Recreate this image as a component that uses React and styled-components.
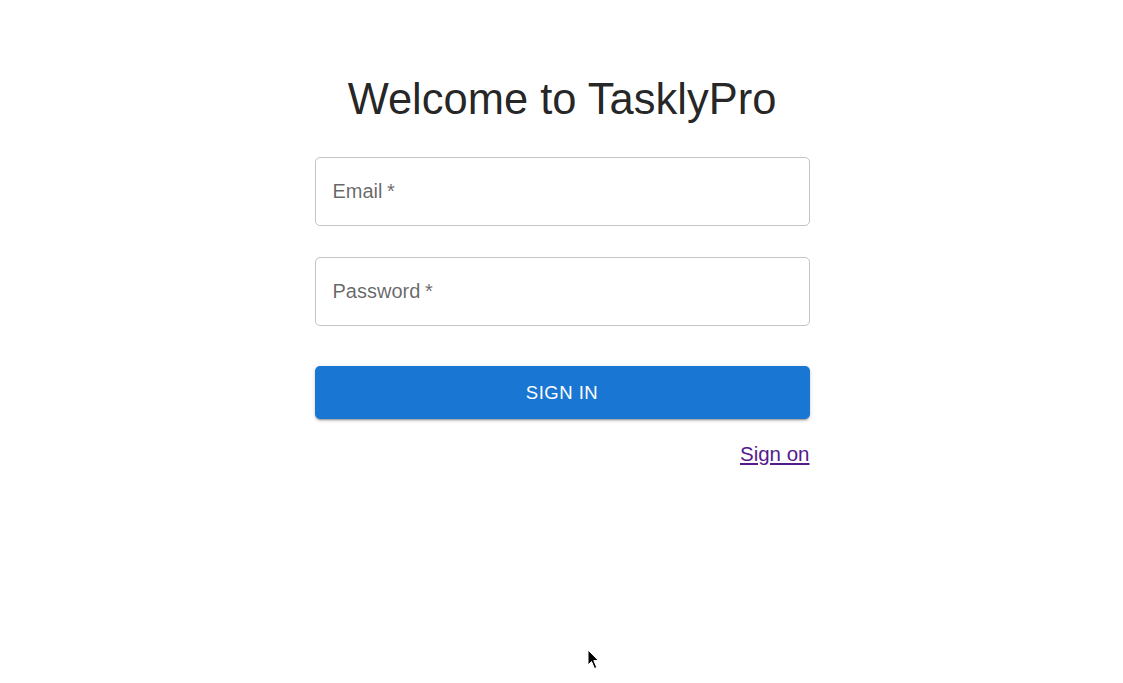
import styled, { createGlobalStyle } from 'styled-components';

const GlobalStyle = createGlobalStyle`
  html, body {
    margin: 0;
    padding: 0;
    background: #ffffff;
    font-family: "Liberation Sans", Arial, sans-serif;
  }
`;

const App = () => {
  return (
    <>
      <GlobalStyle />
      <Page>
        <Form>
          <Title>Welcome to TasklyPro</Title>
          <Field label="Email" />
          <Field label="Password" />
          <SubmitButton type="button">Sign in</SubmitButton>
          <LinkRow>
            <SignOnLink href="#">Sign on</SignOnLink>
          </LinkRow>
        </Form>
        <Cursor />
      </Page>
    </>
  );
};

const Field = ({ label }) => {
  return (
    <FieldBox>
      <FieldLabel>
        {label} <Asterisk>*</Asterisk>
      </FieldLabel>
    </FieldBox>
  );
};

const Cursor = () => (
  <CursorWrap>
    <svg width="14" height="22" viewBox="0 0 14 22">
      <path
        d="M1 1 L1 16 L4.5 12.5 L7.5 19.5 L9.8 18.5 L6.8 11.6 L11.5 11.6 Z"
        fill="#000"
        stroke="#fff"
        strokeWidth="1"
      />
    </svg>
  </CursorWrap>
);

const Page = styled.div`
  position: relative;
  width: 100%;
  height: 683px;
  display: flex;
  justify-content: center;
  padding-left: 1px;
  box-sizing: border-box;
`;

const Form = styled.div`
  width: 495px;
  margin-top: 73px;
  display: flex;
  flex-direction: column;
`;

const Title = styled.h1`
  margin: 0 0 32px;
  font-size: 43.5px;
  font-weight: 400;
  line-height: 52px;
  text-align: center;
  color: rgba(0, 0, 0, 0.87);
`;

const FieldBox = styled.div`
  height: 69px;
  border: 1px solid rgba(0, 0, 0, 0.23);
  border-radius: 5px;
  box-sizing: border-box;
  display: flex;
  align-items: center;
  padding-left: 17px;
  margin-bottom: 31px;

  &:nth-of-type(2) {
    margin-bottom: 40px;
  }
`;

const FieldLabel = styled.span`
  font-size: 20px;
  color: rgba(0, 0, 0, 0.6);
  line-height: 1;
  margin-top: -2px;
`;

const Asterisk = styled.span`
  margin-left: -1px;
`;

const SubmitButton = styled.button`
  height: 53px;
  border: none;
  border-radius: 5px;
  background: #1976d2;
  color: #ffffff;
  font-family: "Liberation Sans", Arial, sans-serif;
  font-size: 18.5px;
  font-weight: 400;
  letter-spacing: 0.5px;
  text-transform: uppercase;
  box-shadow: 0 3px 1px -2px rgba(0, 0, 0, 0.2), 0 2px 2px 0 rgba(0, 0, 0, 0.14),
    0 1px 5px 0 rgba(0, 0, 0, 0.12);
  cursor: pointer;
`;

const LinkRow = styled.div`
  margin-top: 20px;
  display: flex;
  justify-content: flex-end;
  line-height: 30px;
`;

const SignOnLink = styled.a`
  font-size: 20.5px;
  color: #551a8b;
  text-decoration: underline;
`;

const CursorWrap = styled.div`
  position: absolute;
  left: 587px;
  top: 649px;
  line-height: 0;
`;

export default App;
